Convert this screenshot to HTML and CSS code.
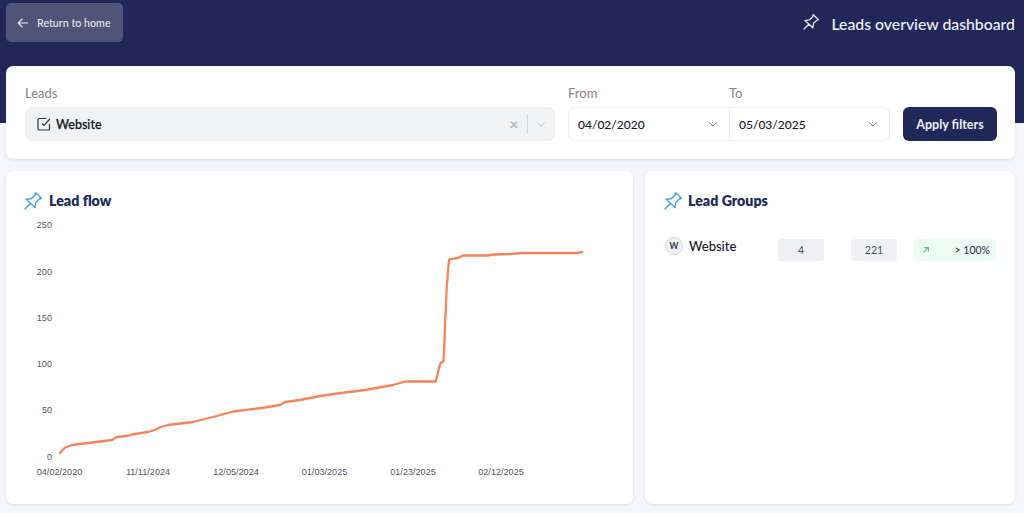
FILE: index.html
```html
<!DOCTYPE html>
<html lang="en">
<head>
<meta charset="utf-8">
<title>Leads overview dashboard</title>
<link rel="stylesheet" href="styles.css">
</head>
<body>
<header class="hero">
  <button class="back">
    <svg class="back-icon" viewBox="0 0 12 12"><path d="M11 6H1.500M5.500 1.600 1.200 6l4.300 4.400"/></svg>
    <span>Return to home</span>
  </button>
  <h1 class="page-title">
    <svg class="pin pin-white" viewBox="0 0 18 18"><path d="M11.500.8 17.500 6.300 15.500 7 11.800 10.500 11 15.500 2.500 7.500 7.500 6.500 11 3ZM6.500 11.500.7 17.300"/></svg>
    <span>Leads overview dashboard</span>
  </h1>
</header>
<main class="content">
  <section class="card filters">
    <div class="field leads">
      <label class="label">Leads</label>
      <div class="select">
        <svg class="check" viewBox="0 0 14 14"><path d="M12.500 7v4.700a1.300 1.300 0 0 1-1.300 1.300H2.300A1.300 1.300 0 0 1 1 11.700V2.800a1.300 1.300 0 0 1 1.300-1.300h7M5 6.500 7 8.500 12.800 2"/></svg>
        <span class="select-value">Website</span>
        <span class="clear">×</span>
        <span class="sep"></span>
        <svg class="chev chev-faint" viewBox="0 0 12 8"><path d="M1.500 1.500 6 6l4.500-4.500"/></svg>
      </div>
    </div>
    <div class="dates">
      <div class="date-col">
        <label class="label">From</label>
        <div class="date date-from"><span>04/02/2020</span><svg class="chev" viewBox="0 0 12 8"><path d="M1.500 1.500 6 6l4.500-4.500"/></svg></div>
      </div>
      <div class="date-col">
        <label class="label">To</label>
        <div class="date date-to"><span>05/03/2025</span><svg class="chev" viewBox="0 0 12 8"><path d="M1.500 1.500 6 6l4.500-4.500"/></svg></div>
      </div>
    </div>
    <button class="apply">Apply filters</button>
  </section>
  <div class="panels">
    <section class="card flow">
      <h2 class="card-title">
        <svg class="pin pin-blue" viewBox="0 0 18 18"><path d="M11.500.8 17.500 6.300 15.500 7 11.800 10.500 11 15.500 2.500 7.500 7.500 6.500 11 3ZM6.500 11.500.7 17.300"/></svg>
        <span>Lead flow</span>
      </h2>
      <svg class="chart" viewBox="6 211 627 293" width="627" height="293">
        <g class="ticks-y">
          <text x="52" y="228">250</text>
          <text x="52" y="274.500">200</text>
          <text x="52" y="321">150</text>
          <text x="52" y="367">100</text>
          <text x="52" y="413">50</text>
          <text x="52" y="460">0</text>
        </g>
        <g class="ticks-x">
          <text x="59.500" y="475">04/02/2020</text>
          <text x="148" y="475">11/11/2024</text>
          <text x="236" y="475">12/05/2024</text>
          <text x="324.500" y="475">01/03/2025</text>
          <text x="413" y="475">01/23/2025</text>
          <text x="501" y="475">02/12/2025</text>
        </g>
        <path class="line" d="M60 453 65 447.500 72 445 80 444 112 440 117 437 127 436 132 434.500 148 432 156 429.500 161 427 168 425 193 422 205 419 215 416.500 233 411.500 265 407.500 280 405 285 402 300 400 320 396 337 393.500 365 390 393 385 405 381.500 435.700 381.500 440 364.500 441 362.500 443.300 362 444 353 445.300 320 446.700 287 448.700 263 449.300 259.300 458 258 463 255.500 487 255.500 495 254.500 510 254 522 253 577 253 582 252"/>
      </svg>
    </section>
    <section class="card groups">
      <h2 class="card-title">
        <svg class="pin pin-blue" viewBox="0 0 18 18"><path d="M11.500.8 17.500 6.300 15.500 7 11.800 10.500 11 15.500 2.500 7.500 7.500 6.500 11 3ZM6.500 11.500.7 17.300"/></svg>
        <span>Lead Groups</span>
      </h2>
      <div class="group-row">
        <span class="avatar">W</span>
        <span class="group-name">Website</span>
        <span class="chip chip-count">4</span>
        <span class="chip chip-total">221</span>
        <span class="chip chip-up">
          <svg class="up" viewBox="0 0 10 10"><path d="M2 8 8 2M3 2h5v5"/></svg>
          <span>&gt; 100%</span>
        </span>
      </div>
    </section>
  </div>
</main>
</body>
</html>
```

FILE: styles.css
```css
* { box-sizing: border-box; }
html, body { margin: 0; height: 513px; overflow: hidden; }
body { background: #f4f6fb; font-family: Lato, "Noto Sans", sans-serif; color: #15171f; }

.hero {
  height: 123px;
  background: #212759;
  display: flex;
  justify-content: space-between;
  align-items: flex-start;
  padding: 3px 9px 0 6px;
}
.back {
  width: 117px;
  height: 39px;
  display: flex;
  align-items: center;
  gap: 8px;
  padding: 0 0 0 11px;
  border: 0;
  border-radius: 5px;
  background: #4f5478;
  color: #e6e7ee;
  font: 500 10.700px Lato, sans-serif;
}
.back-icon { width: 12px; height: 12px; fill: none; stroke: #eceef4; stroke-width: 1.200; }
.page-title {
  margin: 10px 0 0;
  display: flex;
  align-items: center;
  gap: 12px;
  font-size: 15.800px;
  font-weight: 500;
  color: #f1f2f6;
  height: 20px;
}
.pin { fill: none; }
.pin-white { width: 16px; height: 16px; stroke: #f1f2f6; stroke-width: 1.400; margin-top: -3px; }
.pin-blue { width: 18px; height: 18px; stroke: #4ba3e3; stroke-width: 1.500; }

.content { margin-top: -57px; padding: 0 9px 0 6px; display: flex; flex-direction: column; gap: 12px; position: relative; }
.card { background: #fff; border-radius: 7px; box-shadow: 0 1px 3px rgba(33, 39, 89, .12); }

.filters { height: 93px; display: flex; align-items: flex-start; padding: 19px 18px 0 19px; }
.field, .date-col { display: flex; flex-direction: column; }
.leads { width: 530px; margin-right: 13px; }
.label { height: 22px; line-height: 16px; font-size: 13px; color: #858589; }
.select {
  height: 34px;
  display: flex;
  align-items: center;
  background: #f1f2f4;
  border: 1px solid #eceef1;
  border-radius: 7px;
  padding-left: 11px;
}
.check { width: 14px; height: 14px; fill: none; stroke: #33343c; stroke-width: 1.200; margin-right: 5px; }
.select-value { flex: 1; font-size: 12.500px; font-weight: 500; color: #17181f; -webkit-text-stroke: .25px #17181f; }
.clear { width: 14px; color: #b4b6bb; font-size: 16px; line-height: 1; text-align: center; margin-right: 6px; font-weight: 700; }
.sep { width: 1px; height: 20px; background: #d9dade; margin-right: 8px; }
.chev { width: 10px; height: 7px; fill: none; stroke: #6f7076; stroke-width: 1.200; }
.chev-faint { stroke: #c2c4c9; margin-right: 8px; }

.dates { display: flex; margin-right: 13px; }
.date-col { width: 161px; }
.date {
  height: 34px;
  display: flex;
  align-items: center;
  justify-content: space-between;
  font-size: 12px;
  font-weight: 500;
  color: #17181f;
  background: #fff;
  border: 1px solid #eceef1;
  padding: 0 11px 0 9px;
}
.date-from { border-radius: 7px 0 0 7px; border-right-width: 0; }
.date-to { border-radius: 0 7px 7px 0; }
.apply {
  width: 94px;
  height: 34px;
  margin-top: 22px;
  border: 0;
  border-radius: 6px;
  background: #212759;
  color: #eef0f5;
  font: 700 12.500px Lato, sans-serif;
}

.panels { display: flex; gap: 12px; }
.flow { width: 627px; height: 333px; }
.groups { width: 370px; height: 333px; }
.card-title {
  margin: 0;
  height: 40px;
  padding: 19px 0 0 18px;
  display: flex;
  align-items: center;
  gap: 7px;
  font-size: 14.200px;
  font-weight: 800;
  color: #232a5c;
}
.groups .card-title { padding-left: 19px; gap: 6px; }

.chart { display: block; }
.chart text { font-family: "Liberation Sans", Arial, sans-serif; font-size: 9.100px; fill: #55565a; }
.ticks-y text { text-anchor: end; }
.ticks-x text { text-anchor: middle; }
.line { fill: none; stroke: #f5845c; stroke-width: 2.300; stroke-linejoin: round; stroke-linecap: round; }

.group-row { display: flex; align-items: flex-start; padding: 26px 19px 0 20px; }
.avatar {
  width: 18px; height: 18px;
  border-radius: 50%;
  background: #f1f2f5;
  border: 1px solid #d5d7dc;
  font-size: 8.500px; font-weight: 700;
  color: #33353f;
  display: flex; align-items: center; justify-content: center;
  margin-right: 6px;
}
.group-name { width: 89px; font-size: 13px; font-weight: 500; line-height: 18px; }
.chip {
  height: 22px;
  margin-top: 2px;
  border-radius: 3px;
  font-size: 10.500px;
  display: flex;
  align-items: center;
  justify-content: center;
  background: #eff0f4;
  color: #484d72;
}
.chip-count, .chip-total { width: 46px; margin-right: 27px; }
.chip-total { margin-right: 17px; }
.chip-up { width: 82px; background: #ecfbf3; color: #232a4f; justify-content: space-between; padding: 0 6px 0 8px; }
.up { width: 8px; height: 8px; fill: none; stroke: #58bd7a; stroke-width: 1.400; }
```
